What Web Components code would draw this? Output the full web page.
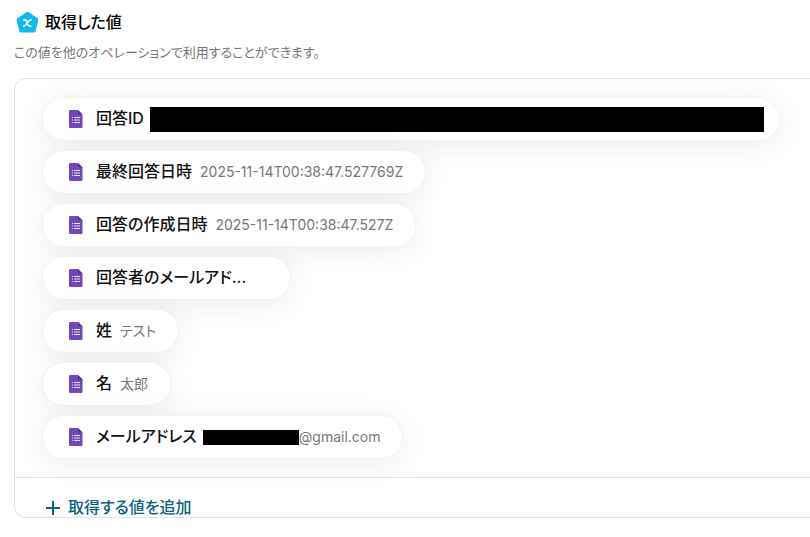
<!DOCTYPE html>
<html lang="ja">
<head>
<meta charset="utf-8">
<meta name="viewport" content="width=device-width, initial-scale=1">
<title>取得した値</title>
<style>
  body {
    margin: 0;
    background: #fff;
    color: #1a1a1a;
    font-family: Inter, "Noto Sans CJK JP", sans-serif;
    font-feature-settings: "palt";
    overflow-x: hidden;
  }
</style>
</head>
<body>
<output-section>
  <span slot="title">取得した値</span>
  <span slot="description">この値を他のオペレーションで利用することができます。</span>
  <output-panel>
    <value-chip wide label="回答ID"><masked-value size="large"></masked-value></value-chip>
    <value-chip label="最終回答日時">2025-11-14T00:38:47.527769Z</value-chip>
    <value-chip label="回答の作成日時">2025-11-14T00:38:47.527Z</value-chip>
    <value-chip empty label="回答者のメールアド..."></value-chip>
    <value-chip label="姓">テスト</value-chip>
    <value-chip label="名">太郎</value-chip>
    <value-chip label="メールアドレス"><masked-value></masked-value>@gmail.com</value-chip>
    <add-button slot="footer">取得する値を追加</add-button>
  </output-panel>
</output-section>

<script>
class OutputSection extends HTMLElement {
    constructor() {
        super();
        this.attachShadow({mode: 'open'}).innerHTML = `
            <style>
                :host {
                    display: block;
                    padding: 8px 0 20px 14px;
                }
                header {
                    display: flex;
                    align-items: center;
                    gap: 6px;
                    height: 28px;
                    padding-left: 2px;
                }
                svg {
                    flex: none;
                    width: 23px;
                    height: 23px;
                }
                h2 {
                    margin: 0;
                    font-size: 16px;
                    font-weight: 500;
                    line-height: 24px;
                    color: #000;
                }
                p {
                    margin: 6px 0 16px;
                    font-size: 13px;
                    line-height: 20px;
                    color: #777;
                }
            </style>
            <header>
                <svg viewBox="0 0 23 23" aria-hidden="true">
                    <path d="M10.4 1.2Q11.5.4 12.6 1.2L21.6 7.2Q22.7 8 22.3 9.3L19.6 20.2Q19.2 21.4 17.9 21.4H5.1Q3.8 21.4 3.4 20.2L.7 9.3Q.3 8 1.4 7.2Z" fill="#10b9ec"/>
                    <path d="M7.2 8.9H8.6Q9.8 8.9 10.3 9.9L12.5 14.2Q13 15.2 14.2 15.2H15.4M15.6 8.9Q14 8.7 12.7 10.3L9.9 13.7Q8.5 15.3 7 15.2" fill="none" stroke="#fff" stroke-width="1.7"/>
                </svg>
                <h2><slot name="title"></slot></h2>
            </header>
            <p><slot name="description"></slot></p>
            <slot></slot>
        `;
    }
}

class OutputPanel extends HTMLElement {
    constructor() {
        super();
        this.attachShadow({mode: 'open'}).innerHTML = `
            <style>
                :host {
                    display: block;
                    border: 1px solid #e2e2e2;
                    border-right: none;
                    border-radius: 12px 0 0 12px;
                    overflow: hidden;
                }
                .values {
                    display: flex;
                    flex-direction: column;
                    align-items: flex-start;
                    gap: 9px;
                    padding: 18px 30px 18px 27px;
                }
                .footer {
                    border-top: 1px solid #e2e2e2;
                    padding: 20px 30px 0;
                }
            </style>
            <div class="values"><slot></slot></div>
            <div class="footer"><slot name="footer"></slot></div>
        `;
    }
}

class ValueChip extends HTMLElement {
    constructor() {
        super();
        this.attachShadow({mode: 'open'}).innerHTML = `
            <style>
                :host {
                    display: flex;
                    align-items: center;
                    box-sizing: border-box;
                    max-width: 100%;
                    height: 44px;
                    padding: 0 22px 0 26px;
                    border: 1px solid #f2f2f2;
                    border-radius: 22px;
                    background: #fff;
                    box-shadow: 0 4px 32px rgba(0, 0, 0, .08);
                    position: relative;
                }
                :host([wide]) {
                    align-self: stretch;
                    padding-right: 15px;
                }
                :host([empty]) {
                    padding-right: 36px;
                }
                svg {
                    flex: none;
                    width: 14px;
                    height: 18px;
                    margin-right: 13px;
                }
                .label {
                    flex: none;
                    font-size: 16px;
                    font-weight: 500;
                    line-height: 24px;
                    padding-bottom: 2px;
                    color: #111;
                }
                .value {
                    display: flex;
                    align-items: center;
                    flex: 1;
                    min-width: 0;
                    margin-left: 8px;
                    font-size: 14px;
                    line-height: 20px;
                    color: #777;
                }
            </style>
            <svg viewBox="0 0 14 18" aria-hidden="true">
                <path d="M1.3 0H9L13.5 4.5V16.7Q13.5 18 12.2 18H1.3Q0 18 0 16.7V1.3Q0 0 1.3 0Z" fill="#7248b9"/>
                <path d="M9 0L13.5 4.5H10.2Q9 4.5 9 3.3Z" fill="#523488"/>
                <path d="M5 7.5H11M5 10H11M5 12.5H11M3 7.5H4M3 10H4M3 12.5H4" stroke="#e6dcf5" stroke-width="1"/>
            </svg>
            <span class="label"></span>
            <span class="value"><slot></slot></span>
        `;
    }

    connectedCallback() {
        this.shadowRoot.querySelector('.label').textContent = this.getAttribute('label');
    }
}

class MaskedValue extends HTMLElement {
    constructor() {
        super();
        this.attachShadow({mode: 'open'}).innerHTML = `
            <style>
                :host {
                    display: block;
                    width: 96px;
                    height: 15px;
                    margin-left: -2px;
                    background: #000;
                }
                :host([size="large"]) {
                    flex: 1;
                    height: 25px;
                }
            </style>
        `;
    }
}

class AddButton extends HTMLElement {
    constructor() {
        super();
        this.attachShadow({mode: 'open'}).innerHTML = `
            <style>
                :host {
                    display: block;
                }
                button {
                    display: flex;
                    align-items: center;
                    gap: 7px;
                    height: 19px;
                    padding: 0;
                    border: none;
                    background: none;
                    font: inherit;
                    font-feature-settings: inherit;
                    font-size: 16px;
                    font-weight: 500;
                    line-height: 19px;
                    color: #0b6380;
                    cursor: pointer;
                }
                svg {
                    width: 16px;
                    height: 16px;
                }
            </style>
            <button type="button">
                <svg viewBox="0 0 16 16" aria-hidden="true">
                    <path d="M8 1V15M1 8H15" stroke="currentColor" stroke-width="2"/>
                </svg>
                <slot></slot>
            </button>
        `;
    }
}

customElements.define('masked-value', MaskedValue);
customElements.define('add-button', AddButton);
customElements.define('value-chip', ValueChip);
customElements.define('output-panel', OutputPanel);
customElements.define('output-section', OutputSection);
</script>
</body>
</html>
